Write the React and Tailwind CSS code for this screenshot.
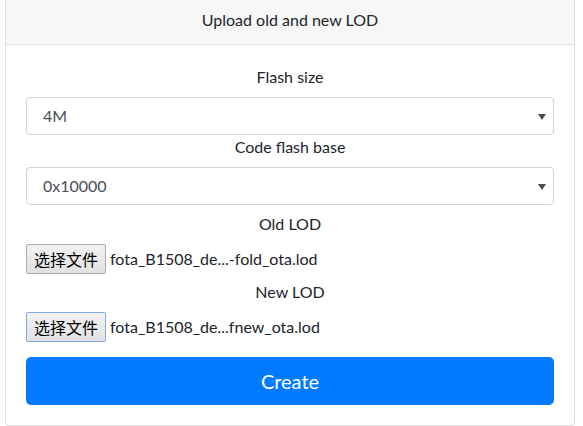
import React from "react";

const font = { fontFamily: '"Segoe UI", Lato, "Noto Sans CJK SC", sans-serif' };

function SelectBox({ value }) {
  return (
    <div className="h-[38px] w-full rounded-[4px] border border-[#ced4da] bg-white flex items-center justify-between pl-4 pr-[7px] text-[16px] text-[#495057]">
      <span>{value}</span>
      <svg width="8" height="6" viewBox="0 0 8 6" className="mt-[1px]">
        <path d="M0 0 H8 L4 6 Z" fill="#4d4d4d" />
      </svg>
    </div>
  );
}

function FileInput({ name, focused }) {
  return (
    <div className="h-[30px] flex items-center">
      <div
        className={
          "h-[30px] w-[80px] rounded-[2px] border bg-gradient-to-b from-[#f2f2f2] to-[#e2e2e2] flex items-center justify-center text-[16px] text-black " +
          (focused ? "border-[#7eaae6]" : "border-[#adadad]")
        }
        style={{ fontFamily: '"Noto Sans CJK SC", sans-serif' }}
      >
        选择文件
      </div>
      <span className="ml-[4px] text-[16px] text-[#212529]">{name}</span>
    </div>
  );
}

function Label({ children, className = "" }) {
  return <div className={"h-6 leading-6 text-center text-[16px] text-[#212529] " + className}>{children}</div>;
}

export default function App() {
  return (
    <div className="w-[583px] h-[426px] bg-white overflow-hidden" style={font}>
      <div className="ml-[5px] w-[570px] border-x border-b border-[#dfdfdf] rounded-b-[4px] bg-white">
        <div className="h-[45px] bg-[#f7f7f7] border-b border-[#dfdfdf] pt-[8px] leading-6 text-center text-[16px] text-[#212529]">
          Upload old and new LOD
        </div>
        <div className="px-5 pt-5 pb-5 flex flex-col">
          <Label className="mb-2">Flash size</Label>
          <SelectBox value="4M" />
          <Label className="mb-2">Code flash base</Label>
          <SelectBox value="0x10000" />
          <Label className="mt-[7px] mb-2">Old LOD</Label>
          <FileInput name="fota_B1508_de...-fold_ota.lod" />
          <Label className="mt-[6px] mb-2">New LOD</Label>
          <FileInput name="fota_B1508_de...fnew_ota.lod" focused />
          <button className="mt-[15px] h-12 w-full rounded-[5px] bg-[#007bff] text-white text-[20px]">
            Create
          </button>
        </div>
      </div>
    </div>
  );
}
